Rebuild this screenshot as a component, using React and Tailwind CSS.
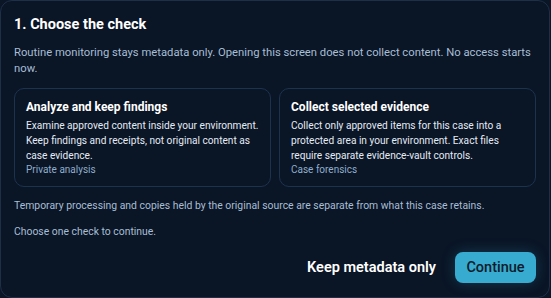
export default function App() {
  return (
    <div className="w-[551px] h-[298px] bg-[#0a1526]" style={{ fontFamily: "Roboto, 'Liberation Sans', sans-serif" }}>
      <div className="h-[298px] w-[550px] rounded-[12px] border border-[#1d3048] bg-[#0a1526] px-[13px] pt-[13px]">
        <h2 className="text-[14.5px] font-bold leading-[22px] text-white">1. Choose the check</h2>
        <p className="mt-[9px] text-[11.25px] leading-[16px] text-[#a7bed4]">
          <span className="whitespace-nowrap">
            Routine monitoring stays metadata only. Opening this screen does not collect content. No access starts
          </span>{" "}
          now.
        </p>
        <div className="mt-[11px] grid grid-cols-2 gap-[8px]">
          <div className="h-[99px] rounded-[10px] border border-[#1c3350] pl-[11px] pr-[2px] pt-[9px]">
            <h3 className="text-[12px] font-bold leading-[18px] text-white">Analyze and keep findings</h3>
            <p className="mt-[2px] text-[10.15px] leading-[15px] text-[#e3ebf4]">
              Examine approved content inside your environment. Keep findings and receipts, not original content as case evidence.
            </p>
            <div className="mt-[1px] text-[10px] leading-[12px] text-[#8eaecb]">Private analysis</div>
          </div>
          <div className="h-[99px] rounded-[10px] border border-[#1c3350] pl-[11px] pr-[14px] pt-[9px]">
            <h3 className="text-[12px] font-bold leading-[18px] text-white">Collect selected evidence</h3>
            <p className="mt-[2px] text-[10.15px] leading-[15px] text-[#e3ebf4]">
              Collect only approved items for this case into a protected area in your environment. Exact files require separate evidence-vault controls.
            </p>
            <div className="mt-[1px] text-[10px] leading-[12px] text-[#8eaecb]">Case forensics</div>
          </div>
        </div>
        <p className="mt-[11px] text-[10.4px] leading-[16px] text-[#a7bed4]">
          Temporary processing and copies held by the original source are separate from what this case retains.
        </p>
        <p className="mt-[10px] text-[10.4px] leading-[16px] text-[#a7bed4]">Choose one check to continue.</p>
        <div className="mt-[12px] flex items-center justify-end gap-[19px]">
          <button className="text-[14.5px] font-semibold text-white">Keep metadata only</button>
          <button className="h-[31px] w-[81px] rounded-[8px] bg-[#38acd0] text-[14.5px] font-medium text-[#0b1b2c] shadow-[0_0_14px_rgba(56,172,208,0.25)]">
            Continue
          </button>
        </div>
      </div>
    </div>
  );
}
